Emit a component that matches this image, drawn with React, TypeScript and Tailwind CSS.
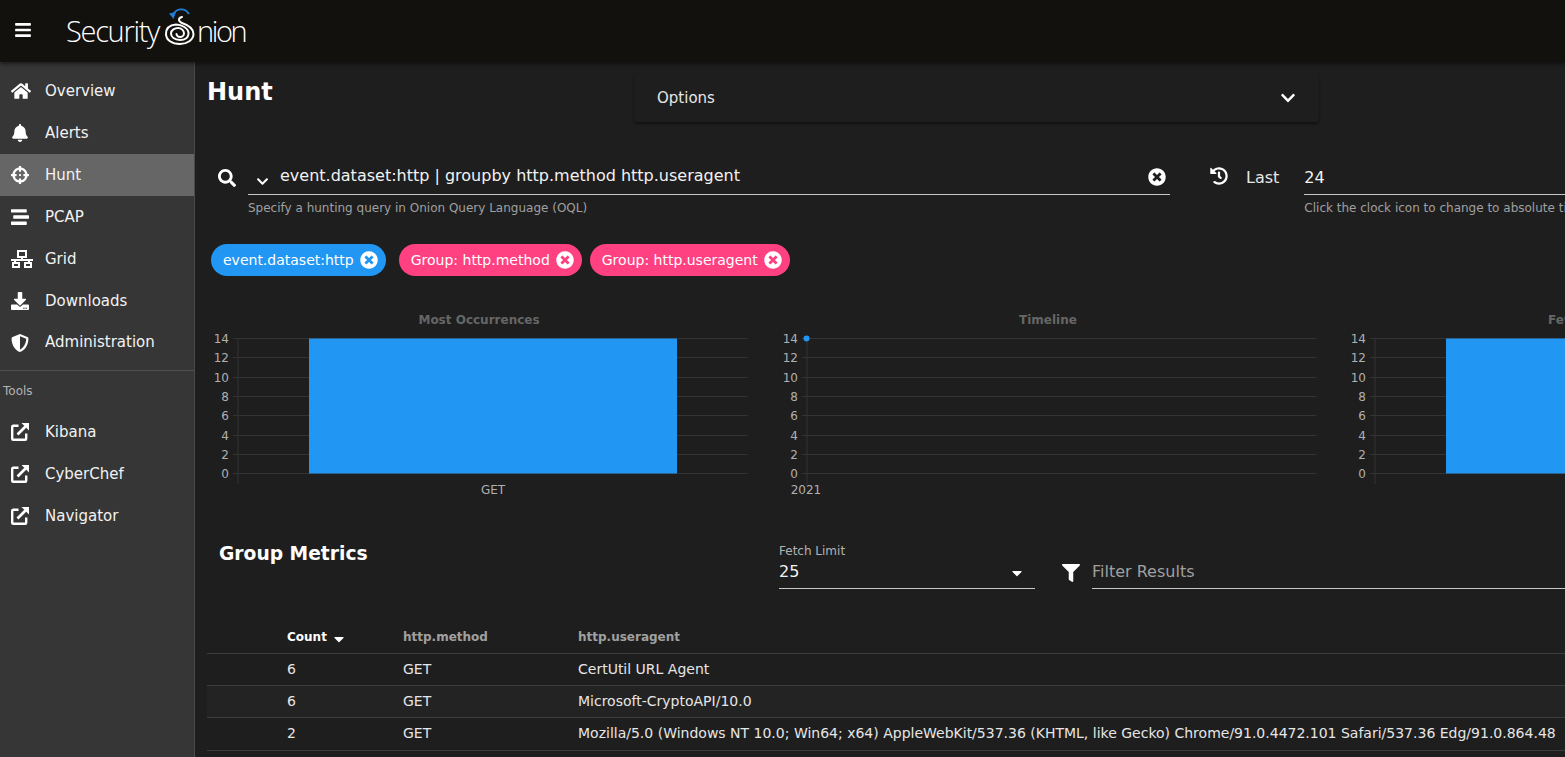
import type { ReactNode } from "react";
import {
  FaBars,
  FaBell,
  FaCaretDown,
  FaChevronDown,
  FaCrosshairs,
  FaDownload,
  FaFilter,
  FaHistory,
  FaHome,
  FaSearch,
  FaShieldAlt,
  FaStream,
  FaTimesCircle,
} from "react-icons/fa";

function GridIcon() {
  return (
    <svg viewBox="0 0 22 18" className="w-[22px] h-[18px]" fill="none" stroke="currentColor" strokeWidth="2">
      <rect x="7" y="1" width="8" height="6" />
      <rect x="2" y="13" width="6" height="4" />
      <rect x="14" y="13" width="6" height="4" />
      <path d="M0 10h22M11 7v3M4 10v3M18 10v3" />
    </svg>
  );
}

function ExternalIcon() {
  return (
    <svg viewBox="0 0 18 18" className="w-[18px] h-[18px]" fill="none">
      <path d="M7.5 2.8H2.2a1 1 0 0 0-1 1V15.8a1 1 0 0 0 1 1H14.2a1 1 0 0 0 1-1V10.5" stroke="currentColor" strokeWidth="2.4" />
      <path d="M6.5 11.5 14.5 3.5" stroke="currentColor" strokeWidth="2.6" />
      <path d="M10.5 0H18V7.5Z" fill="currentColor" />
    </svg>
  );
}

function Logo() {
  return (
    <div className="flex items-center ml-[35px] text-white" style={{ fontFamily: '"Open Sans", sans-serif' }}>
      <span className="w-[99px] text-[29px] font-light tracking-[-1.3px] leading-none -mt-[2px]">Security</span>
      <svg viewBox="0 0 32 40" className="w-[32px] h-[40px] -mt-[6px] shrink-0" fill="none">
        <path d="M8 8C10 0 20 -1 24 6" stroke="#1e7fd6" strokeWidth="1.8" />
        <path d="M4 5.5 11 4 8.5 11Z" fill="#1e7fd6" />
        <path
          d="M17 9C13 10 13 13 17 15C23 17 28.5 20 28.5 26C28.5 32 22 36 15 36C7 36 1 32 1 26C1 20 5 17 11 16.5C16 16.5 24 20 23.5 26C23 31 18 32 15 32C9.5 32 6 29 6 25.5C6 22 10 20 13 20C16.5 20 19 22.5 19 25.5C19 27.5 17 29 15 29C13 29 11.5 27.5 11.5 26"
          stroke="#fff"
          strokeWidth="2"
          strokeLinecap="round"
        />
      </svg>
      <span className="text-[29px] font-light tracking-[-2.4px] leading-none -mt-[2px]">nion</span>
    </div>
  );
}

function NavItem({ icon, label, active, short }: { icon: ReactNode; label: string; active?: boolean; short?: boolean }) {
  return (
    <div className={`flex items-center pl-[11px] text-[15px] text-[#f2f2f2] ${short ? "h-[41px]" : "h-[42px]"} ${active ? "bg-[#666666]" : ""}`}>
      <span className="w-[34px] text-white flex items-center text-[20px]">{icon}</span>
      {label}
    </div>
  );
}

function Chip({ label, color }: { label: string; color: string }) {
  return (
    <div className={`flex items-center h-[32px] rounded-full pl-[12px] pr-[8px] text-[14px] text-white ${color}`}>
      <span>{label}</span>
      <span className="ml-[6px] w-[18px] h-[18px] text-[18px] flex items-center justify-center">
        <FaTimesCircle />
      </span>
    </div>
  );
}

const yTicks = [
  { label: "14", y: 28.5 },
  { label: "12", y: 47.5 },
  { label: "10", y: 67.5 },
  { label: "8", y: 86.5 },
  { label: "6", y: 105.5 },
  { label: "4", y: 125.5 },
  { label: "2", y: 144.5 },
  { label: "0", y: 163.5 },
];

function Chart({ title, xLabel, xLabelAt, bar, dot }: { title: string; xLabel: string; xLabelAt: number; bar?: boolean; dot?: boolean }) {
  return (
    <svg width="568.5" height="190" className="block shrink-0" style={{ fontFamily: '"DejaVu Sans", sans-serif' }}>
      <text x="272" y="14" textAnchor="middle" fontSize="12" fontWeight="700" fill="#666666">
        {title}
      </text>
      {yTicks.map((t) => (
        <g key={t.label}>
          <line x1="26" x2="540.5" y1={t.y} y2={t.y} stroke="#333333" />
          <text x="22" y={t.y + 4} textAnchor="end" fontSize="12" fill="#b0b0b0">
            {t.label}
          </text>
        </g>
      ))}
      <line x1="31" x2="31" y1="28" y2="174" stroke="#333333" />
      {bar && <rect x="102" y="28.5" width="368" height="135" fill="#2196f3" />}
      {dot && <circle cx="30.5" cy="28.5" r="3" fill="#2196f3" />}
      <text x={xLabelAt} y="184" textAnchor="middle" fontSize="12" fill="#b0b0b0">
        {xLabel}
      </text>
    </svg>
  );
}

const rows = [
  { count: "6", method: "GET", agent: "CertUtil URL Agent" },
  { count: "6", method: "GET", agent: "Microsoft-CryptoAPI/10.0", hover: true },
  {
    count: "2",
    method: "GET",
    agent:
      "Mozilla/5.0 (Windows NT 10.0; Win64; x64) AppleWebKit/537.36 (KHTML, like Gecko) Chrome/91.0.4472.101 Safari/537.36 Edg/91.0.864.48",
  },
];

export default function App() {
  return (
    <div
      className="h-screen w-full overflow-hidden flex flex-col bg-[#1e1e1e] text-white"
      style={{ fontFamily: '"DejaVu Sans", sans-serif' }}
    >
      <header className="h-[62px] shrink-0 flex items-center bg-[#12110e] pl-[15px] shadow-[0_2px_4px_rgba(0,0,0,0.5)] z-10">
        <FaBars className="text-white w-[16px] h-[18px] -mt-[3px]" />
        <Logo />
      </header>

      <div className="flex flex-1 min-h-0">
        <aside className="w-[195px] shrink-0 bg-[#363636] border-r border-[#4a4a4a] pt-[8px]">
          <NavItem icon={<FaHome />} label="Overview" />
          <NavItem icon={<FaBell className="text-[18px]" />} label="Alerts" />
          <NavItem icon={<FaCrosshairs className="text-[18px]" />} label="Hunt" active />
          <NavItem icon={<FaStream className="text-[18px]" />} label="PCAP" />
          <NavItem icon={<GridIcon />} label="Grid" />
          <NavItem icon={<FaDownload className="text-[18px]" />} label="Downloads" />
          <NavItem icon={<FaShieldAlt className="text-[18px]" />} label="Administration" short />
          <div className="border-t border-[#4f4f4f] mt-[7px]" />
          <div className="h-[40px] pl-[3px] pt-[11px] text-[12px] text-[#b3b3b3]">Tools</div>
          <NavItem icon={<ExternalIcon />} label="Kibana" />
          <NavItem icon={<ExternalIcon />} label="CyberChef" />
          <NavItem icon={<ExternalIcon />} label="Navigator" />
        </aside>

        <main className="flex-1 min-w-0 overflow-hidden pl-[12px]">
          <div className="flex pt-[11px] w-[1112px]">
            <h1 className="w-[427px] text-[24px] font-bold leading-[38px] text-white">Hunt</h1>
            <div className="w-[685px] h-[49px] flex items-center justify-between pl-[23px] pr-[23px] rounded bg-[#1e1e1e] shadow-[0_2px_3px_rgba(0,0,0,0.45)] text-[15px] text-[#e6e6e6]">
              <span className="mt-[2px]">Options</span>
              <FaChevronDown className="text-[16px] text-white" />
            </div>
          </div>

          <div className="flex mt-[38px] w-[1500px]">
            <FaSearch className="ml-[11px] mt-[9px] text-[18px] text-white shrink-0" />
            <div className="ml-[12px] w-[922px] shrink-0">
              <div className="flex items-center h-[35px] border-b border-[#c8c8c8] pr-[4px]">
                <FaChevronDown className="ml-[8px] mt-[8px] text-[13px] text-white" />
                <span className="ml-[11px] text-[16px] text-[#f2f2f2] -mt-[3px]">event.dataset:http | groupby http.method http.useragent</span>
                <FaTimesCircle className="ml-auto text-[18px] text-white" />
              </div>
              <div className="mt-[4px] text-[12px] text-[#a0a0a0]">Specify a hunting query in Onion Query Language (OQL)</div>
            </div>
            <FaHistory className="ml-[40px] mt-[7px] text-[18px] text-white shrink-0" />
            <span className="ml-[18px] mt-[6px] text-[16px] text-[#e6e6e6] shrink-0">Last</span>
            <div className="ml-[25px] w-[400px] shrink-0">
              <div className="h-[35px] border-b border-[#c8c8c8] text-[16px] text-[#f2f2f2] pt-[6px]">24</div>
              <div className="mt-[4px] text-[12px] text-[#a0a0a0] whitespace-nowrap">Click the clock icon to change to absolute time</div>
            </div>
          </div>

          <div className="flex mt-[27px] ml-[4px]">
            <Chip label="event.dataset:http" color="bg-[#2196f3]" />
            <div className="ml-[13px]">
              <Chip label="Group: http.method" color="bg-[#ff4081]" />
            </div>
            <div className="ml-[8px]">
              <Chip label="Group: http.useragent" color="bg-[#ff4081]" />
            </div>
          </div>

          <div className="flex mt-[34px] w-[1707px]">
            <Chart title="Most Occurrences" xLabel="GET" xLabelAt={286} bar />
            <Chart title="Timeline" xLabel="2021" xLabelAt={30} dot />
            <Chart title="Fewest Occurrences" xLabel="GET" xLabelAt={286} bar />
          </div>

          <div className="flex mt-[40px] w-[1500px] h-[50px]">
            <h2 className="ml-[12px] w-[560px] text-[18.7px] font-bold leading-[28px] text-white shrink-0">Group Metrics</h2>
            <div className="w-[256px] shrink-0 border-b border-[#c8c8c8] h-[49px]">
              <div className="text-[12px] text-[#b3b3b3] leading-[16px] mt-[3px]">Fetch Limit</div>
              <div className="flex items-center justify-between pr-[10px] mt-[1px]">
                <span className="text-[16px] text-[#f2f2f2]">25</span>
                <FaCaretDown className="text-[16px] text-white mt-[2px]" />
              </div>
            </div>
            <FaFilter className="ml-[27px] mt-[24px] text-[18px] text-white shrink-0" />
            <div className="ml-[12px] w-[600px] shrink-0 h-[49px] border-b border-[#c8c8c8] pt-[20px] text-[16px] text-[#a0a0a0]">Filter Results</div>
          </div>

          <table className="mt-[31px] w-[1358px] table-fixed border-collapse text-[14px] text-[#e6e6e6]">
            <thead>
              <tr className="h-[32px] border-b border-[#3d3d3d] text-[12px] font-bold text-left">
                <th className="w-[80px]" />
                <th className="w-[116px] text-white font-bold">
                  Count <FaCaretDown className="inline text-[16px] -mb-[4px]" />
                </th>
                <th className="w-[175px] text-[#a0a0a0] font-bold">http.method</th>
                <th className="text-[#a0a0a0] font-bold">http.useragent</th>
              </tr>
            </thead>
            <tbody>
              {rows.map((r) => (
                <tr key={r.agent} className={`h-[32px] last:h-[33px] border-b border-[#3d3d3d] ${r.hover ? "bg-[#232323]" : ""}`}>
                  <td />
                  <td>{r.count}</td>
                  <td>{r.method}</td>
                  <td className="whitespace-nowrap">{r.agent}</td>
                </tr>
              ))}
            </tbody>
          </table>
        </main>
      </div>
    </div>
  );
}
